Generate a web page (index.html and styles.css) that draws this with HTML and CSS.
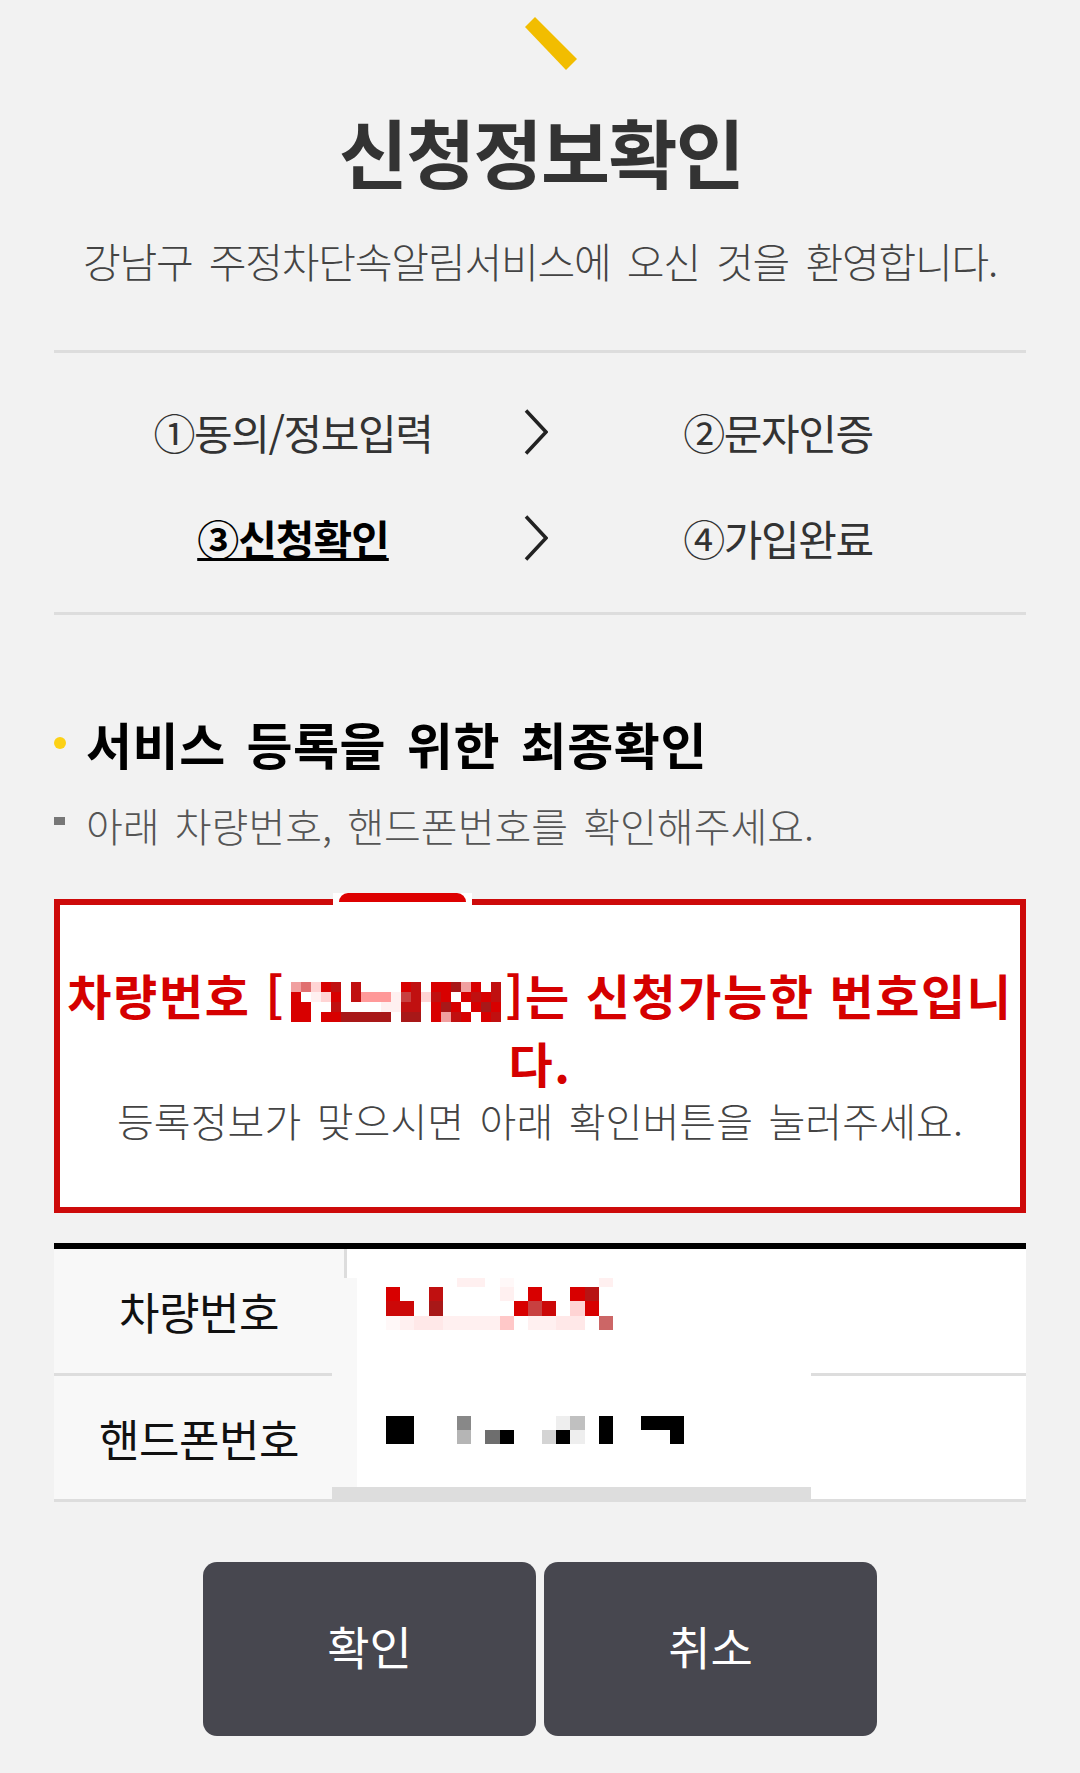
FILE: index.html
```html
<!DOCTYPE html>
<html lang="ko">
<head>
<meta charset="utf-8">
<title>신청정보확인</title>
<link rel="stylesheet" href="styles.css">
</head>
<body>
<div class="page">
  <header class="top">
    <svg class="mark" viewBox="520 14 60 58" width="60" height="58"><polygon points="535,17 577,59 566,70 525,27" fill="#f2bd00"/></svg>
    <h1 class="title">신청정보확인</h1>
    <p class="intro">강남구 주정차단속알림서비스에 오신 것을 환영합니다.</p>
  </header>

  <nav class="steps">
    <div class="step">①동의/정보입력</div>
    <svg class="chev" viewBox="0 0 24 46" width="24" height="46"><polyline points="2,1.5 22,23 2,44.5" fill="none" stroke="#222" stroke-width="3.5"/></svg>
    <div class="step step-r">②문자인증</div>
    <div class="step"><span class="active">③신청확인</span></div>
    <svg class="chev" viewBox="0 0 24 46" width="24" height="46"><polyline points="2,1.5 22,23 2,44.5" fill="none" stroke="#222" stroke-width="3.5"/></svg>
    <div class="step step-r">④가입완료</div>
  </nav>

  <h2 class="sec-title">서비스 등록을 위한 최종확인</h2>
  <p class="sec-desc">아래 차량번호, 핸드폰번호를 확인해주세요.</p>

  <section class="notice">
    <span class="tab"></span>
    <p class="msg">차량번호 [<span class="mz mz-msg"><i class="l"></i><i class="m"></i><i class="p"></i><i class="r"></i><i class="d"></i><i></i><i class="d"></i><i></i><i></i><i></i><i></i><i class="r"></i><i class="d"></i><i></i><i class="r"></i><i class="r"></i><i class="dd"></i><i class="l"></i><i class="r"></i><i></i><i class="d"></i><i class="r"></i><i></i><i class="q"></i><i class="p"></i><i class="r"></i><i></i><i class="d"></i><i class="s"></i><i class="s"></i><i class="s"></i><i class="q"></i><i class="t"></i><i class="d"></i><i class="p"></i><i class="d"></i><i class="r"></i><i></i><i class="r"></i><i class="d"></i><i class="r"></i><i class="d"></i><i class="r"></i><i class="r"></i><i></i><i></i><i class="d"></i><i></i><i></i><i></i><i></i><i class="q"></i><i class="q"></i><i class="d"></i><i class="d"></i><i></i><i class="r"></i><i class="dd"></i><i class="r"></i><i></i><i class="r"></i><i class="dd"></i><i class="r"></i><i class="r"></i><i class="r"></i><i></i><i class="r"></i><i class="r"></i><i class="dd"></i><i class="dd"></i><i class="dd"></i><i class="dd"></i><i class="dd"></i><i></i><i class="dd"></i><i class="dd"></i><i></i><i class="r"></i><i class="l"></i><i class="d"></i><i class="r"></i><i></i><i class="r"></i><i class="d"></i></span>]는 신청가능한 번호입니다.</p>
    <p class="msg-sub">등록정보가 맞으시면 아래 확인버튼을 눌러주세요.</p>
  </section>

  <div class="info">
    <div class="row"><div class="label">차량번호</div><div class="value"></div></div>
    <div class="row"><div class="label">핸드폰번호</div><div class="value"></div></div>
    <div class="cover">
      <span class="mz mz-car"><i></i><i></i><i></i><i></i><i></i><i class="q"></i><i class="q"></i><i></i><i class="w"></i><i></i><i></i><i></i><i></i><i></i><i></i><i class="q"></i><i class="r"></i><i></i><i></i><i class="d"></i><i></i><i></i><i></i><i></i><i class="q"></i><i></i><i class="r"></i><i></i><i></i><i class="r"></i><i class="d2"></i><i></i><i class="r2"></i><i class="r2"></i><i></i><i class="dd"></i><i></i><i></i><i></i><i></i><i></i><i class="r"></i><i class="t"></i><i class="r2"></i><i></i><i class="p"></i><i class="r"></i><i></i><i class="w"></i><i class="q"></i><i class="v"></i><i class="v"></i><i class="q"></i><i class="q"></i><i class="q"></i><i class="q"></i><i class="x"></i><i></i><i class="q"></i><i class="q"></i><i class="v"></i><i class="v"></i><i></i><i class="u"></i></span>
      <span class="mz mz-tel"><i class="k"></i><i class="k"></i><i></i><i></i><i></i><i class="g1"></i><i></i><i></i><i></i><i></i><i></i><i></i><i class="g5"></i><i class="g3"></i><i></i><i class="k"></i><i></i><i></i><i class="k"></i><i class="k"></i><i class="k"></i><i class="k"></i><i class="k"></i><i></i><i></i><i></i><i class="g2"></i><i></i><i class="g4"></i><i class="k"></i><i></i><i></i><i class="g6"></i><i class="k"></i><i class="g5"></i><i></i><i class="k"></i><i></i><i></i><i></i><i></i><i class="k"></i></span>
    </div>
  </div>

  <div class="actions">
    <button class="btn" type="button">확인</button>
    <button class="btn" type="button">취소</button>
  </div>
</div>
</body>
</html>
```
FILE: styles.css
```css
* { box-sizing: border-box; }
html, body { margin: 0; padding: 0; }
body {
  background: #f2f2f2;
  font-family: "Noto Sans CJK KR", "Noto Sans", sans-serif;
  color: #333;
  width: 1080px;
}
.page { padding: 0 54px 37px; }

.mark { display: block; margin: 14px 0 0 466px; }
.title {
  margin: 42px 0 0;
  font-size: 75px;
  line-height: 74px;
  font-weight: 700;
  letter-spacing: -1.6px;
  padding-left: 2px;
  text-align: center;
  color: #333;
}
.intro {
  margin: 52px 0 0;
  font-size: 41px;
  line-height: 41px;
  font-weight: 300;
  letter-spacing: -1.2px;
  word-spacing: 6px;
  text-align: center;
  color: #444;
}

.steps {
  margin-top: 69px;
  border-top: 3px solid #ddd;
  border-bottom: 3px solid #ddd;
  padding: 26px 0 21px;
  display: grid;
  grid-template-columns: 470px 24px 1fr;
  grid-auto-rows: 106px;
  align-items: center;
}
.step {
  font-size: 42px;
  line-height: 106px;
  letter-spacing: -1.4px;
  text-align: center;
  color: #333;
  padding-left: 8px;
}
.step-r { padding-left: 0; padding-right: 18px; }
.chev { display: block; }
.active {
  font-weight: 700;
  color: #000;
  letter-spacing: -1px;
  text-decoration: underline;
  text-decoration-thickness: 3px;
  text-underline-offset: 2px;
}

.sec-title {
  margin: 103px 0 0;
  display: flex;
  align-items: center;
  gap: 20px;
  font-size: 50px;
  line-height: 50px;
  font-weight: 700;
  letter-spacing: 0.6px;
  word-spacing: 6px;
  color: #000;
}
.sec-title::before {
  content: "";
  width: 12px;
  height: 12px;
  border-radius: 50%;
  background: #fcd116;
  flex: none;
}
.sec-desc {
  margin: 37px 0 0;
  display: flex;
  align-items: center;
  gap: 21px;
  font-size: 40px;
  line-height: 40px;
  font-weight: 300;
  letter-spacing: 0;
  word-spacing: 4px;
  color: #555;
}
.sec-desc::before {
  content: "";
  width: 11px;
  height: 8px;
  background: #777;
  flex: none;
  margin-bottom: 8px;
}

.notice {
  position: relative;
  margin-top: 54px;
  border: 6px solid #cd0a0a;
  background: #fff;
  padding: 55px 0 63px;
  text-align: center;
}
.tab {
  position: absolute;
  top: -12px;
  left: 273px;
  width: 139px;
  height: 12px;
  background: #fff;
}
.tab::before {
  content: "";
  position: absolute;
  top: 0;
  left: 6px;
  right: 6px;
  height: 9px;
  background: #dd0000;
  border-radius: 16px 16px 0 0;
}
.msg {
  margin: 0;
  font-size: 48px;
  line-height: 68px;
  font-weight: 700;
  letter-spacing: 1.6px;
  color: #d50000;
}
.msg-sub {
  margin: 0;
  font-size: 40px;
  line-height: 48px;
  font-weight: 300;
  letter-spacing: 0.1px;
  word-spacing: 4px;
  color: #444;
}

.mz { display: inline-grid; vertical-align: middle; }
.mz i { display: block; }
.mz-msg {
  grid-template-columns: repeat(21, 10px);
  grid-template-rows: repeat(4, 10px);
  margin: 0 4px 0 6px;
}
.mz-car {
  grid-template-columns: repeat(16, 14.2px);
  grid-template-rows: 9px 14px 15px 14px;
}
.mz-tel {
  grid-template-columns: repeat(21, 14.2px);
  grid-template-rows: 14px 14px;
  margin-top: 86px;
}
.r { background: #d80000; }
.r2 { background: #cc0808; }
.d { background: #c01010; }
.d2 { background: #b81414; }
.dd { background: #a81818; }
.m { background: #e07070; }
.l { background: #f0a0a0; }
.p { background: #ffd4d4; }
.q { background: #fff0f0; }
.s { background: #ff9999; }
.t { background: #c84040; }
.u { background: #cc6666; }
.v { background: #ffe8e8; }
.w { background: #fff8f8; }
.x { background: #ffc8c8; }
.k { background: #000; }
.g1 { background: #888; }
.g2 { background: #b5b5b5; }
.g3 { background: #c0c0c0; }
.g4 { background: #6e6e6e; }
.g5 { background: #eee; }
.g6 { background: #d4d4d4; }

.info {
  position: relative;
  margin-top: 30px;
  border-top: 6px solid #000;
  background: #fff;
}
.row {
  display: grid;
  grid-template-columns: 293px 1fr;
  height: 127px;
  border-bottom: 3px solid #ddd;
}
.row + .row { height: 126px; }
.label {
  background: #f8f8f8;
  border-right: 3px solid #ddd;
  display: flex;
  align-items: center;
  justify-content: center;
  font-size: 44px;
  letter-spacing: -0.5px;
  color: #111;
}
.cover {
  position: absolute;
  top: 29px;
  left: 278px;
  width: 479px;
  height: 221px;
  background: linear-gradient(to right, #f8f8f8 25px, #fff 25px);
  border-bottom: 12px solid #ddd;
  padding-left: 54px;
  display: flex;
  flex-direction: column;
  align-items: flex-start;
}

.actions {
  margin-top: 60px;
  display: flex;
  justify-content: center;
  gap: 8px;
}
.btn {
  width: 333px;
  height: 174px;
  border: 0;
  border-radius: 14px;
  background: #47474f;
  color: #fff;
  font-family: inherit;
  font-size: 46px;
  letter-spacing: 0;
  padding: 0 0 8px 0;
}
```
